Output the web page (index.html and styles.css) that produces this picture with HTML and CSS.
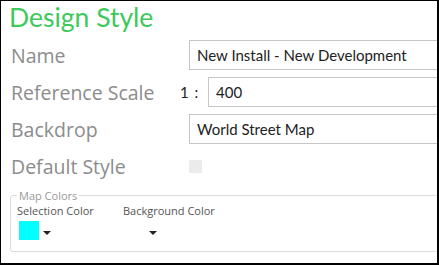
FILE: index.html
```html
<!DOCTYPE html>
<html lang="en">
<head>
    <meta charset="UTF-8">
    <title>Design Style</title>
    <link rel="stylesheet" href="styles.css">
</head>
<body>
    <div class="panel">
        <h1>Design Style</h1>
        <div class="form-row">
            <label>Name</label>
            <input type="text" class="text-input" value="New Install - New Development">
        </div>
        <div class="form-row">
            <label>Reference Scale</label>
            <div class="scale">
                <span class="scale-prefix">1 :</span>
                <input type="text" class="text-input" value="400">
            </div>
        </div>
        <div class="form-row">
            <label>Backdrop</label>
            <input type="text" class="text-input" value="World Street Map">
        </div>
        <div class="form-row">
            <label>Default Style</label>
            <span class="checkbox"></span>
        </div>
        <fieldset class="colors">
            <legend>Map Colors</legend>
            <div class="color-item">
                <div class="color-label">Selection Color</div>
                <div class="picker">
                    <span class="swatch cyan"></span>
                    <span class="caret"></span>
                </div>
            </div>
            <div class="color-item">
                <div class="color-label">Background Color</div>
                <div class="picker">
                    <span class="swatch empty"></span>
                    <span class="caret"></span>
                </div>
            </div>
        </fieldset>
    </div>
</body>
</html>
```

FILE: styles.css
```css
body {
    margin: 0;
    background-color: white;
    font-family: 'Open Sans', sans-serif;
}

.panel {
    width: 428px;
    height: 262px;
    border: 1px solid black;
    border-right-width: 2px;
    border-bottom-width: 2px;
    overflow: hidden;
    padding: 0 0 0 8px;
}

h1 {
    margin: 0 0 7px 0;
    font-family: 'Lato', sans-serif;
    font-weight: normal;
    font-size: 26.5px;
    line-height: 32px;
    color: #3ec95c;
}

.form-row {
    display: grid;
    grid-template-columns: 180px 300px;
    align-items: center;
    height: 30px;
    margin-bottom: 7px;
}

.form-row label {
    padding-left: 2px;
    font-size: 19.5px;
    color: #8c8c8c;
}

.text-input {
    box-sizing: border-box;
    width: 300px;
    height: 30px;
    padding: 0 7px;
    border: 1px solid #c6c6c6;
    font-family: 'Lato', sans-serif;
    font-size: 15px;
    color: #222;
    outline: none;
}

.scale {
    display: flex;
    align-items: center;
    margin-left: -9px;
}

.scale-prefix {
    flex-shrink: 0;
    width: 28px;
    font-family: 'Lato', sans-serif;
    font-size: 15px;
    word-spacing: 2px;
    color: #222;
}

.scale .text-input {
    flex-shrink: 0;
}

.checkbox {
    width: 13px;
    height: 13px;
    background-color: #ebebeb;
}

.colors {
    display: flex;
    margin: 4px 0 0 1px;
    padding: 0 0 11px 6px;
    border: 1px solid #dcdcdc;
    border-radius: 3px;
    width: 460px;
}

.colors legend {
    padding: 0 2px;
    font-size: 11px;
    color: #9a9a9a;
}

.color-item {
    width: 106px;
}

.color-label {
    font-size: 11px;
    color: #555;
    line-height: 15px;
}

.picker {
    display: flex;
    align-items: center;
    margin-top: 3px;
}

.swatch {
    width: 20px;
    height: 19px;
    margin-left: 2px;
}

.swatch.cyan {
    background-color: #00ffff;
}

.caret {
    width: 0;
    height: 0;
    margin-left: 4px;
    margin-top: 4px;
    border-left: 4px solid transparent;
    border-right: 4px solid transparent;
    border-top: 4px solid #222;
}
```
